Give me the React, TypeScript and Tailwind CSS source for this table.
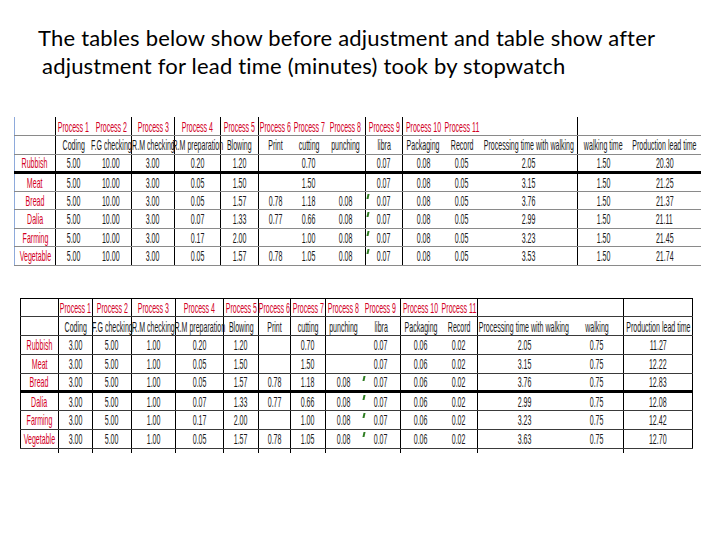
import React from "react";

type Tbl = {
  widths: string[];
  vlines: boolean[];
  h2: string[];
  rows: string[][];
  thickAfter: number;
  hcolor: string;
  row: string;
  outer: boolean;
  tw: string;
};

const LABELS = ["Rubbish", "Meat", "Bread", "Dalia", "Farming", "Vegetable"];
const PROC = ["", "Process 1", "Process 2", "Process 3", "Process 4", "Process 5", "Process 6", "Process 7", "Process 8", "Process 9", "Process 10", "Process 11", "", "", ""];

const T1: Tbl = {
  widths: ["w-[41px]", "w-[36px]", "w-[40px]", "w-[43px]", "w-[46px]", "w-[38px]", "w-[34px]", "w-[33px]", "w-[40px]", "w-[37px]", "w-[41px]", "w-[37px]", "w-[97px]", "w-[51px]", "w-[72px]"],
  vlines: [true, false, true, true, true, true, false, false, true, true, false, false, true, false, false],
  h2: ["", "Coding", "F.G checking", "R.M checking", "R.M preparation", "Blowing", "Print", "cutting", "punching", "libra", "Packaging", "Record", "Processing time with walking", "walking time", "Production lead time"],
  rows: [
    ["5.00", "10.00", "3.00", "0.20", "1.20", "", "0.70", "", "0.07", "0.08", "0.05", "2.05", "1.50", "20.30"],
    ["5.00", "10.00", "3.00", "0.05", "1.50", "", "1.50", "", "0.07", "0.08", "0.05", "3.15", "1.50", "21.25"],
    ["5.00", "10.00", "3.00", "0.05", "1.57", "0.78", "1.18", "0.08", "0.07", "0.08", "0.05", "3.76", "1.50", "21.37"],
    ["5.00", "10.00", "3.00", "0.07", "1.33", "0.77", "0.66", "0.08", "0.07", "0.08", "0.05", "2.99", "1.50", "21.11"],
    ["5.00", "10.00", "3.00", "0.17", "2.00", "", "1.00", "0.08", "0.07", "0.08", "0.05", "3.23", "1.50", "21.45"],
    ["5.00", "10.00", "3.00", "0.05", "1.57", "0.78", "1.05", "0.08", "0.07", "0.08", "0.05", "3.53", "1.50", "21.74"],
  ],
  thickAfter: 0,
  hcolor: "border-b-[#8a8a8a]",
  row: "h-[18.5px]",
  outer: false,
  tw: "w-[686px]",
};

const T2: Tbl = {
  widths: ["w-[38px]", "w-[34px]", "w-[39px]", "w-[44px]", "w-[48px]", "w-[35px]", "w-[32px]", "w-[35px]", "w-[36px]", "w-[39px]", "w-[40px]", "w-[37px]", "w-[93px]", "w-[53px]", "w-[69px]"],
  vlines: [true, true, true, true, true, true, true, true, false, true, false, true, false, true, true],
  h2: ["", "Coding", "F.G checking", "R.M checking", "R.M preparation", "Blowing", "Print", "cutting", "punching", "libra", "Packaging", "Record", "Processing time with walking", "walking", "Production lead time"],
  rows: [
    ["3.00", "5.00", "1.00", "0.20", "1.20", "", "0.70", "", "0.07", "0.06", "0.02", "2.05", "0.75", "11.27"],
    ["3.00", "5.00", "1.00", "0.05", "1.50", "", "1.50", "", "0.07", "0.06", "0.02", "3.15", "0.75", "12.22"],
    ["3.00", "5.00", "1.00", "0.05", "1.57", "0.78", "1.18", "0.08", "0.07", "0.06", "0.02", "3.76", "0.75", "12.83"],
    ["3.00", "5.00", "1.00", "0.07", "1.33", "0.77", "0.66", "0.08", "0.07", "0.06", "0.02", "2.99", "0.75", "12.08"],
    ["3.00", "5.00", "1.00", "0.17", "2.00", "", "1.00", "0.08", "0.07", "0.06", "0.02", "3.23", "0.75", "12.42"],
    ["3.00", "5.00", "1.00", "0.05", "1.57", "0.78", "1.05", "0.08", "0.07", "0.06", "0.02", "3.63", "0.75", "12.70"],
  ],
  thickAfter: 2,
  hcolor: "border-b-[#3a3a3a]",
  row: "h-[18.75px]",
  outer: true,
  tw: "w-[672px]",
};

function Txt({ children, red }: { children: React.ReactNode; red?: boolean }) {
  return (
    <div className="flex justify-center overflow-visible">
      <span
        className={
          "shrink-0 whitespace-nowrap scale-x-[0.47] leading-none " +
          (red ? "text-[#d3001f]" : "text-[#1a1a1a]")
        }
      >
        {children}
      </span>
    </div>
  );
}

function Table({ t }: { t: Tbl }) {
  const cellCls = (ci: number, extra: string) =>
    "relative p-0 overflow-visible border-b " +
    t.hcolor +
    " " +
    (t.vlines[ci] ? "border-r border-r-black " : "border-r-0 ") +
    (ci === 0 ? (t.outer ? "border-l border-l-black " : "border-l border-l-[#8eaadb] ") : "") +
    extra;

  return (
    <table className={"table-fixed border-collapse font-['Liberation_Sans',Arial,sans-serif] text-[15px] " + t.tw}>
      <colgroup>
        {t.widths.map((w, i) => (
          <col key={i} className={w} />
        ))}
      </colgroup>
      <tbody>
        <tr className={t.row}>
          {PROC.map((p, ci) => (
            <td key={ci} className={cellCls(ci, t.outer ? "border-t border-t-black" : "")}>
              <Txt red>{p}</Txt>
            </td>
          ))}
        </tr>
        <tr className={t.row}>
          {t.h2.map((p, ci) => (
            <td key={ci} className={cellCls(ci, "")}>
              <Txt>{p}</Txt>
            </td>
          ))}
        </tr>
        {t.rows.map((r, ri) => (
          <tr key={ri} className={t.row}>
            {[LABELS[ri], ...r].map((v, ci) => (
              <td
                key={ci}
                className={cellCls(ci, ri === t.thickAfter ? "border-b-[3px] border-b-black" : "")}
              >
                {ci === 9 && ri >= 2 ? (
                  <span className="absolute left-[1px] top-[2px] h-[5px] w-[2px] -skew-x-12 bg-[#2f7d22]" />
                ) : null}
                <Txt red={ci === 0}>{v}</Txt>
              </td>
            ))}
          </tr>
        ))}
        {t.outer ? (
          <tr className="h-[5px]">
            {t.widths.map((_, ci) => (
              <td
                key={ci}
                className={"p-0 " + (t.vlines[ci] && ci < 14 ? "border-r border-r-black" : "")}
              />
            ))}
          </tr>
        ) : null}
      </tbody>
    </table>
  );
}

export default function App() {
  return (
    <div className="w-[720px] h-[540px] bg-white overflow-hidden">
      <div className="pt-[24px] pl-[38px] font-['Lato','Open_Sans',sans-serif] text-[22px] leading-[28px] text-black tracking-[0.2px]">
        <div>The tables below show before adjustment and table show after</div>
        <div className="pl-[4px]">adjustment for lead time (minutes) took by stopwatch</div>
      </div>
      <div className="mt-[37px] ml-[14px]">
        <Table t={T1} />
      </div>
      <div className="mt-[32px] ml-[20px]">
        <Table t={T2} />
      </div>
    </div>
  );
}
